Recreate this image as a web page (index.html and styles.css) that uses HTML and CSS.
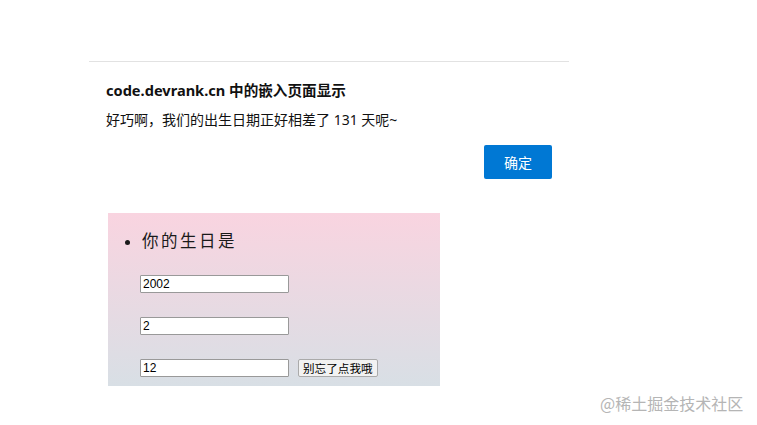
FILE: index.html
```html
<!DOCTYPE html>
<html lang="zh-CN">
<head>
    <meta charset="UTF-8">
    <meta name="viewport" content="width=device-width, initial-scale=1.0">
    <title>生日</title>
    <link rel="stylesheet" href="styles.css">
</head>
<body>
    <div class="dialog">
        <h2 class="dialog-title">code.devrank.cn 中的嵌入页面显示</h2>
        <p class="dialog-msg">好巧啊，我们的出生日期正好相差了 131 天呢~</p>
        <div class="dialog-actions">
            <button class="ok-btn" type="button">确定</button>
        </div>
    </div>

    <div class="panel">
        <ul class="ask">
            <li>你的生日是</li>
        </ul>
        <div class="fields">
            <input type="text" value="2002">
            <input type="text" value="2">
            <div class="last-row">
                <input type="text" value="12">
                <button type="button" class="go-btn">别忘了点我哦</button>
            </div>
        </div>
    </div>

    <div class="watermark">@稀土掘金技术社区</div>
</body>
</html>
```

FILE: styles.css
```css
body { margin: 0; padding: 0; background: #fff; font-family: "Noto Sans", "Noto Sans CJK SC", sans-serif; color: #111; height: 425px; position: relative; overflow: hidden; }
.dialog { margin: 61px 0 0 89px; width: 480px; border-top: 1px solid #e2e2e2; padding: 17px 17px 0 17px; box-sizing: border-box; }
.dialog-title { margin: 0; font-size: 14.6px; font-weight: bold; line-height: 22px; }
.dialog-msg { margin: 9px 0 0; font-size: 14px; line-height: 20px; }
.dialog-actions { display: flex; justify-content: flex-end; margin-top: 15px; }
.ok-btn { width: 68px; height: 34px; border: none; border-radius: 2px; background: #0078d4; color: #fff; font-size: 14px; font-family: inherit; }
.panel { margin: 34px 0 0 108px; width: 332px; height: 173px; background: linear-gradient(#f9d4e0, #d8dfe5); box-sizing: border-box; padding-top: 15px; }
.ask { margin: 0; padding-left: 34px; font-family: "Noto Sans CJK SC", serif; font-size: 16.5px; letter-spacing: 2.5px; line-height: 24px; color: #1a1a1a; }
.ask li::marker { font-size: 14px; }
.fields { display: flex; flex-direction: column; gap: 24px; padding-left: 32px; margin-top: 23px; }
.fields input { width: 149px; height: 18px; box-sizing: border-box; border: 1px solid #999; border-radius: 1px; padding: 0 2px; font-family: "Liberation Sans", sans-serif; font-size: 12px; background: #fff; }
.last-row { display: flex; gap: 9px; align-items: center; }
.go-btn { height: 18px; padding: 0 4px; border: 1px solid #aaa; border-radius: 2px; background: #f2f2f2; font-size: 11.6px; font-family: "Noto Sans CJK SC", sans-serif; line-height: 14px; }
.watermark { position: absolute; left: 600px; top: 391px; font-size: 16px; color: #b5b5b5; font-family: "Noto Sans CJK SC", sans-serif; }
```
